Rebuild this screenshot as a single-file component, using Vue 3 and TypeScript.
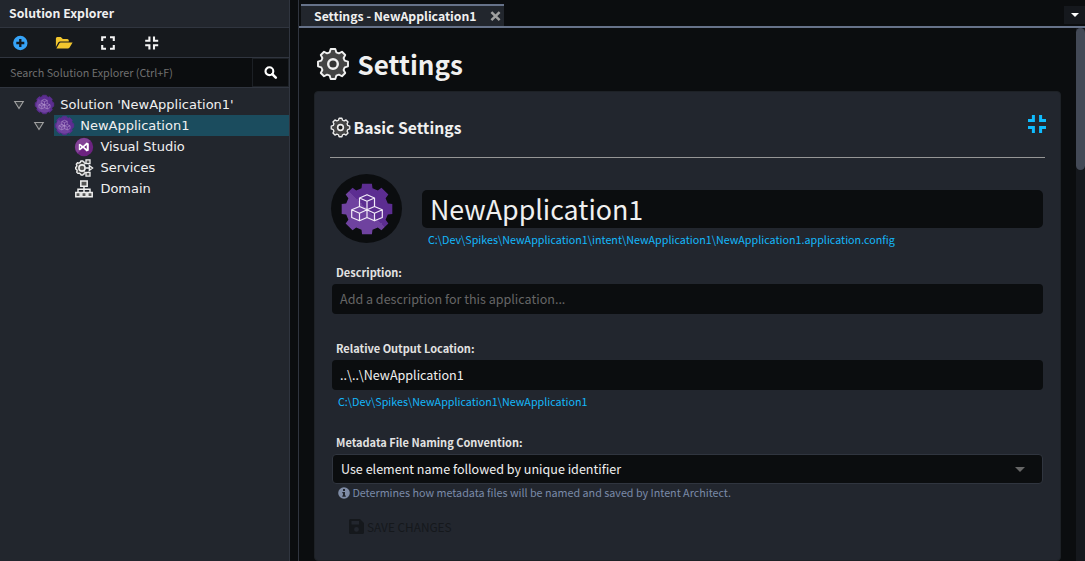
<script setup lang="ts">
function gear(c: number, outer: number, inner: number, topHalf: number, baseHalf: number): string {
  const pts: string[] = []
  for (let i = 0; i < 8; i++) {
    const a = (i * Math.PI) / 4
    const corners: [number, number][] = [
      [-baseHalf, -inner],
      [-topHalf, -outer],
      [topHalf, -outer],
      [baseHalf, -inner],
    ]
    for (const [x, y] of corners) {
      const px = c + x * Math.cos(a) - y * Math.sin(a)
      const py = c + x * Math.sin(a) + y * Math.cos(a)
      pts.push(`${px.toFixed(2)} ${py.toFixed(2)}`)
    }
  }
  return `M${pts.join('L')}Z`
}

const outlineGear = gear(17, 15, 11.7, 2.3, 3.3)
const solidGear = gear(26, 25.3, 20.8, 4.9, 5.5)
const smallGear = gear(26, 25.5, 22, 5, 6.5)

type IconName = 'intent' | 'vs' | 'services' | 'domain'
interface TreeNode {
  label: string
  icon: IconName
  depth: number
  open?: boolean
  selected?: boolean
}

const nodes: TreeNode[] = [
  { label: "Solution 'NewApplication1'", icon: 'intent', depth: 0, open: true },
  { label: 'NewApplication1', icon: 'intent', depth: 1, open: true, selected: true },
  { label: 'Visual Studio', icon: 'vs', depth: 2 },
  { label: 'Services', icon: 'services', depth: 2 },
  { label: 'Domain', icon: 'domain', depth: 2 },
]
</script>

<template>
  <div class="app">
    <aside class="explorer">
      <header class="explorer-title"><span class="t-title">Solution Explorer</span></header>
      <div class="toolbar">
        <svg class="tool" viewBox="0 0 16 16">
          <circle cx="8.3" cy="8" r="7.2" fill="#36a3f7" />
          <path d="M8.3 4v8M4.3 8h8" stroke="#15181d" stroke-width="2.3" />
        </svg>
        <svg class="tool folder" viewBox="0 0 18 14">
          <path d="M0.9 11V2.5Q0.9 1 2.3 1H5.8L7.8 3H12.3Q13.8 3 13.8 4.5V5.5H5.3Q3.9 5.5 3.3 6.6Z" fill="#f2c62e" />
          <path d="M1.4 12.4L4.4 7.2Q4.8 6.4 5.7 6.4H17.6L14.6 11.6Q14.1 12.4 13.2 12.4Z" fill="#f2c62e" />
        </svg>
        <svg class="tool" viewBox="0 0 16 16">
          <path d="M2.2 6V2.2H6M10 2.2H13.8V6M13.8 10V13.8H10M6 13.8H2.2V10" fill="none" stroke="#f4f4f4" stroke-width="2.1" />
        </svg>
        <svg class="tool" viewBox="0 0 16 16">
          <path d="M1.2 5.7H5.4V1.5M10 1.5V5.7H14.2M14.2 10.3H10V14.5M5.4 14.5V10.3H1.2" fill="none" stroke="#f4f4f4" stroke-width="2.1" />
        </svg>
      </div>
      <div class="search">
        <span class="search-text">Search Solution Explorer (Ctrl+F)</span>
        <span class="search-button">
          <svg width="14" height="14" viewBox="0 0 14 14">
            <circle cx="5.4" cy="5.2" r="3.9" fill="none" stroke="#fff" stroke-width="2.1" />
            <path d="M8.3 8.1L11.8 11.6" stroke="#fff" stroke-width="2.6" stroke-linecap="round" />
          </svg>
        </span>
      </div>
      <div class="tree">
        <div v-for="n in nodes" :key="n.label" class="row" :class="'depth-' + n.depth">
          <svg v-if="n.open" class="arrow" width="12" height="10" viewBox="0 0 12 10">
            <path d="M1.7 1.5H10.3L6 8.5Z" fill="#33373b" stroke="#a0a0a0" stroke-width="1.1" />
          </svg>
          <div class="node" :class="{ selected: n.selected }">
            <svg v-if="n.icon === 'intent'" class="node-icon" viewBox="0 0 52 52">
              <path :d="smallGear" fill="#5c2d91" stroke="#5c2d91" stroke-width="1.5" />
              <path d="M10 10A22.6 22.6 0 0 0 42 42Z" fill="#6f429f" />
              <path d="M26 11.7L33.5 15V23.5L26 26.8L18.5 23.5V15ZM18.5 15L26 18.3L33.5 15M26 18.3V26.8M18.5 23.5L26 26.8V34.5L18.5 37.8L10.7 34.5V26.8ZM10.7 26.8L18.5 30.2L26 26.8L33.5 30.2L41.3 26.8M18.5 30.2V37.8M33.5 23.5L41.3 26.8V34.5L33.5 37.8L26 34.5M33.5 30.2V37.8" fill="none" stroke="#bda3d6" stroke-width="1.4" />
            </svg>
            <svg v-else-if="n.icon === 'vs'" class="node-icon" viewBox="0 0 18 18">
              <circle cx="9" cy="9" r="9.2" fill="#6c2380" />
              <path d="M2.7 15.3A8.9 8.9 0 0 1 15.3 2.7Z" fill="#8d519f" opacity=".7" />
              <path d="M3.8 6.3L5 5.8L8 8L11.6 4.6L13.8 5.5V12.5L11.6 13.4L8 10L5 12.2L3.8 11.7ZM4.9 7.8V10.2L6.4 9ZM11.7 7L9.3 9L11.7 11Z" fill="#fff" fill-rule="evenodd" />
            </svg>
            <svg v-else-if="n.icon === 'services'" class="node-icon" viewBox="0 0 18 18">
              <path d="M10 3.4L8.6 3L8 2H5.8L5.2 3.5L3.7 4.1L2.5 3.8L1.3 5.2L1.9 6.5L1.5 7.8L.7 8.4V10L1.7 10.6L2.2 11.9L1.7 13.1L2.9 14.4L4.2 14.2L5.4 14.8L6 16H8L8.6 15L10 14.6" fill="#444" stroke="#eee" stroke-width="1.4" stroke-linejoin="round" />
              <circle cx="7" cy="9" r="3.1" fill="#555" stroke="#eee" stroke-width="1.6" />
              <path d="M9 5.2L13 2.7M10.5 9H15M9 12.8L13 15.2" stroke="#eee" stroke-width="1.3" />
              <path d="M11 .9H15V4.6H11ZM11 13.4H15V17.1H11ZM14.3 6.5L17.6 9L14.3 11.5Z" fill="#555" stroke="#eee" stroke-width="1.3" />
            </svg>
            <svg v-else class="node-icon" viewBox="0 0 18 18">
              <path d="M9 6V12M3 12.5V9.3H15V12.5" fill="none" stroke="#eee" stroke-width="1.5" />
              <path d="M5.8 1H12.2V6.2H5.8ZM.8 12.6H5.2V16.8H.8ZM6.8 12.6H11.2V16.8H6.8ZM12.8 12.6H17.2V16.8H12.8Z" fill="#555" stroke="#eee" stroke-width="1.5" />
            </svg>
            <span class="node-label">{{ n.label }}</span>
          </div>
        </div>
      </div>
    </aside>

    <main class="main">
      <div class="tabs">
        <div class="tab">
          <span class="tab-label">Settings - NewApplication1</span>
          <svg width="11" height="11" viewBox="0 0 11 11">
            <path d="M1.4 1.1L9.6 9.1M9.6 1.1L1.4 9.1" stroke="#a0a0a0" stroke-width="2.5" />
          </svg>
        </div>
        <div class="tab-menu">
          <svg width="8" height="4" viewBox="0 0 8 4"><path d="M0 0H8L4 4Z" fill="#fff" /></svg>
        </div>
      </div>
      <div class="body">
        <div class="content">
          <h1 class="page-title">
            <svg width="34" height="34" viewBox="0 0 34 34">
              <path :d="outlineGear" fill="#444" stroke="#f0f0f0" stroke-width="1.9" stroke-linejoin="round" />
              <circle cx="17" cy="17" r="4.8" fill="#333" stroke="#f0f0f0" stroke-width="2.4" />
            </svg>
            <span class="t-page">Settings</span>
          </h1>
          <section class="card">
            <div class="card-head">
              <svg width="21" height="21" viewBox="0 0 34 34">
                <path :d="outlineGear" fill="#444" stroke="#eee" stroke-width="2.1" stroke-linejoin="round" />
                <circle cx="17" cy="17" r="4.6" fill="#222" stroke="#eee" stroke-width="2.6" />
              </svg>
              <span class="t-card">Basic Settings</span>
              <svg class="compress" width="18" height="18" viewBox="0 0 18 18">
                <path d="M0 5.4H5.4V0M12.6 0V5.4H18M18 12.6H12.6V18M5.4 18V12.6H0" fill="none" stroke="#0fbcff" stroke-width="3" />
              </svg>
            </div>
            <div class="identity">
              <div class="avatar">
                <svg width="52" height="52" viewBox="0 0 52 52">
                  <defs>
                    <linearGradient id="shade" x1="0" y1="1" x2="1" y2="0">
                      <stop offset=".5" stop-color="#6f429f" />
                      <stop offset=".5" stop-color="#5c2d91" />
                    </linearGradient>
                  </defs>
                  <path :d="solidGear" fill="url(#shade)" />
                  <path d="M26 11.7L33.5 15V23.5L26 26.8L18.5 23.5V15ZM18.5 15L26 18.3L33.5 15M26 18.3V26.8M18.5 23.5L26 26.8V34.5L18.5 37.8L10.7 34.5V26.8ZM10.7 26.8L18.5 30.2L26 26.8L33.5 30.2L41.3 26.8M18.5 30.2V37.8M33.5 23.5L41.3 26.8V34.5L33.5 37.8L26 34.5M33.5 30.2V37.8" fill="none" stroke="#f2ecf8" stroke-width="1.2" stroke-linejoin="round" />
                </svg>
              </div>
              <div class="identity-fields">
                <div class="name-input"><span class="t-name">NewApplication1</span></div>
                <span class="path">C:\Dev\Spikes\NewApplication1\intent\NewApplication1\NewApplication1.application.config</span>
              </div>
            </div>
            <div class="field description">
              <label>Description:</label>
              <div class="input placeholder">Add a description for this application...</div>
            </div>
            <div class="field output">
              <label>Relative Output Location:</label>
              <div class="input">..\..\NewApplication1</div>
              <span class="path">C:\Dev\Spikes\NewApplication1\NewApplication1</span>
            </div>
            <div class="field naming">
              <label>Metadata File Naming Convention:</label>
              <div class="input select">
                <span>Use element name followed by unique identifier</span>
                <svg width="10" height="5" viewBox="0 0 10 5"><path d="M0 0H10L5 5Z" fill="#666" /></svg>
              </div>
              <div class="hint">
                <svg width="12" height="12" viewBox="0 0 12 12">
                  <circle cx="6" cy="6" r="5.8" fill="#7f8ca6" />
                  <path d="M5 2.1H7V3.9H5ZM4.3 5H7V8.4H7.8V9.7H4.3V8.4H5V6.2H4.3Z" fill="#22262e" />
                </svg>
                <span>Determines how metadata files will be named and saved by Intent Architect.</span>
              </div>
            </div>
            <div class="save">
              <svg width="15" height="15" viewBox="0 0 15 15">
                <path d="M1.5 0H11L15 4V13.5Q15 15 13.5 15H1.5Q0 15 0 13.5V1.5Q0 0 1.5 0ZM2.5 2V5.5H10V2ZM7.5 8A2.4 2.4 0 1 0 7.5 12.8A2.4 2.4 0 1 0 7.5 8Z" fill="#15181c" fill-rule="evenodd" />
              </svg>
              <span class="save-label">SAVE CHANGES</span>
            </div>
          </section>
        </div>
        <div class="scrollbar"><div class="thumb"></div></div>
      </div>
    </main>
  </div>
</template>

<style>
body {
  background: #0b0d0f;
  overflow: hidden;
}
</style>

<style scoped>
* {
  box-sizing: border-box;
}
.app {
  display: flex;
  width: 1085px;
  height: 561px;
  overflow: hidden;
  background: #0b0d0f;
  color: #f0f0f0;
  font-family: 'Noto Sans CJK SC', 'Noto Sans', sans-serif;
  font-size: 12px;
  white-space: nowrap;
}
svg {
  display: block;
  flex: none;
}
.explorer {
  width: 290px;
  flex: none;
  background: #22262d;
  border-right: 1px solid #30353f;
}
.explorer-title {
  height: 28px;
  padding-left: 9px;
  line-height: 26px;
  border-bottom: 1px solid #30353f;
}
.t-title { font-size: 12.25px; font-weight: 600; }
.toolbar {
  display: flex;
  align-items: center;
  gap: 28px;
  height: 30px;
  padding-left: 12px;
  background: #16191d;
  border-bottom: 1px solid #30353f;
}
.tool { width: 16px; height: 16px; }
.folder { width: 18px; height: 14px; margin: 0 -1px; }
.search {
  display: flex;
  height: 30px;
  background: #0b0d0f;
  border-bottom: 1px solid #30353f;
}
.search-text {
  width: 252px;
  padding-left: 10px;
  color: #707070;
  font-size: 10.75px;
  line-height: 29px;
}
.search-button {
  display: flex;
  align-items: center;
  justify-content: center;
  flex: 1;
  border: 1px solid #1c2025;
}
.tree { padding-top: 6px; }
.row {
  display: flex;
  align-items: center;
  height: 21px;
}
.depth-0 { padding-left: 13px; }
.depth-1 { padding-left: 33px; }
.depth-2 { padding-left: 73px; }
.arrow { margin-right: 9px; }
.node {
  display: flex;
  align-items: center;
  flex: 1;
  height: 21px;
}
.selected { background: #1b4c5e; }
.node-icon {
  width: 18px;
  height: 18px;
  margin: 0 7px 0 2.4px;
  overflow: visible;
}
.depth-0 .node-icon,
.depth-1 .node-icon { width: 19px; height: 19px; margin: 0 6.2px 0 1px; }
.node-label {
  font: 13px/21px 'DejaVu Sans', sans-serif;
}
.main {
  display: flex;
  flex-direction: column;
  flex: 1;
  margin-left: 8px;
  border-left: 1px solid #30353f;
}
.tabs {
  display: flex;
  justify-content: space-between;
  height: 28px;
  padding: 4px 0 0 2px;
  border-bottom: 2px solid #667289;
}
.tab {
  display: flex;
  align-items: center;
  justify-content: space-between;
  width: 203px;
  padding: 0 3px 0 13px;
  background: #22262d;
  border-top: 2px solid #667289;
}
.tab-label { font-size: 12.25px; font-weight: 600; line-height: 20px; }
.tab-menu {
  display: flex;
  align-items: center;
  justify-content: center;
  width: 21px;
  height: 18px;
  margin-top: 2px;
  background: #15181d;
}
.body {
  display: flex;
  justify-content: space-between;
  flex: 1;
}
.content { padding-left: 15px; width: 762px; }
.page-title {
  display: flex;
  align-items: center;
  gap: 7.6px;
  height: 63px;
  margin: 0;
  padding: 9px 0 0 2px;
  font-weight: 600;
}
.t-page { font-size: 26px; line-height: 40px; }
.card {
  width: 747px;
  height: 470px;
  padding: 17px 16px;
  border: 1px solid #1d2126;
  border-radius: 4px;
  background: #22262e;
}
.card-head {
  display: flex;
  align-items: center;
  height: 49px;
  padding-bottom: 12px;
  border-bottom: 1px solid #969696;
  margin-left: -1px;
  width: 715px;
}
.t-card { margin: 1px 0 0 2.6px; font-size: 15.7px; font-weight: 600; line-height: 24px; }
.compress { margin: -6px -1px 0 auto; }
.identity {
  display: flex;
  padding-top: 16px;
  height: 106px;
}
.avatar {
  display: flex;
  align-items: center;
  justify-content: center;
  width: 71px;
  height: 69px;
  border-radius: 50%;
  background: #0b0d0f;
}
.identity-fields {
  display: flex;
  flex-direction: column;
  margin: 16px 0 0 20px;
}
.name-input {
  width: 621px;
  height: 38px;
  padding-left: 8px;
  border-radius: 5px;
  background: #0b0d0f;
}
.t-name { font-size: 26.8px; line-height: 38px; }
.path {
  margin: 4px 0 0 6px;
  color: #14b8fb;
  font-size: 10.75px;
  line-height: 16px;
}
.field {
  display: flex;
  flex-direction: column;
  padding-left: 1px;
}
.field label {
  height: 20px;
  padding-left: 4px;
  font-size: 11px;
  font-weight: 700;
  line-height: 16px;
  color: #e2e2e2;
}
.input {
  width: 711px;
  height: 30px;
  padding-left: 8px;
  border-radius: 4px;
  background: #0b0d0f;
  font-size: 12.55px;
  line-height: 30px;
}
.placeholder { color: #666; }
.output { padding-top: 26px; }
.naming { padding-top: 24px; }
.select {
  display: flex;
  align-items: center;
  justify-content: space-between;
  padding-right: 17px;
  border: 1px solid #30353f;
}
.hint {
  display: flex;
  align-items: center;
  gap: 2.4px;
  padding-left: 6px;
  height: 17px;
  color: #7a8aa8;
  font-size: 10.75px;
  line-height: 17px;
}
.save {
  display: flex;
  align-items: center;
  gap: 3px;
  margin: 17px 0 0 18px;
  height: 16px;
  color: #15181c;
  font-size: 11.85px;
  line-height: 16px;
}
.save-label { padding-top: 2px; }
.scrollbar {
  width: 9px;
  background: #15181d;
}
.thumb {
  height: 142px;
  border-radius: 5px;
  background: #434956;
}
</style>
